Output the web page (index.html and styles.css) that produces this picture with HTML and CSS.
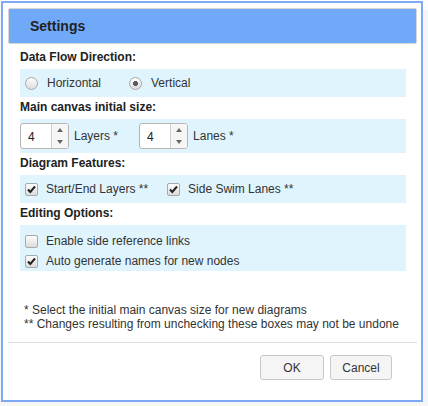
FILE: index.html
```html
<!DOCTYPE html>
<html>
<head>
<meta charset="utf-8">
<link rel="stylesheet" href="styles.css">
</head>
<body>
<div class="dialog">
  <div class="titlebar">Settings</div>
  <div class="content">
    <div class="section-label">Data Flow Direction:</div>
    <div class="row">
      <label class="opt radio-opt"><input type="radio" name="dir" class="radio"><span>Horizontal</span></label>
      <label class="opt radio-opt"><input type="radio" name="dir" class="radio" checked><span>Vertical</span></label>
    </div>
    <div class="section-label">Main canvas initial size:</div>
    <div class="row row-spin">
      <div class="spin-group">
        <div class="spinner"><span class="spin-val">4</span><span class="spin-btns"><span class="up"></span><span class="down"></span></span></div>
        <span class="spin-label">Layers *</span>
      </div>
      <div class="spin-group">
        <div class="spinner"><span class="spin-val">4</span><span class="spin-btns"><span class="up"></span><span class="down"></span></span></div>
        <span class="spin-label">Lanes *</span>
      </div>
    </div>
    <div class="section-label">Diagram Features:</div>
    <div class="row">
      <label class="opt cb-opt"><input type="checkbox" class="check" checked><span>Start/End Layers **</span></label>
      <label class="opt cb-opt"><input type="checkbox" class="check" checked><span>Side Swim Lanes **</span></label>
    </div>
    <div class="section-label">Editing Options:</div>
    <div class="row row-stack">
      <label class="opt cb-opt"><input type="checkbox" class="check"><span>Enable side reference links</span></label>
      <label class="opt cb-opt"><input type="checkbox" class="check" checked><span>Auto generate names for new nodes</span></label>
    </div>
    <div class="notes">
      <div>* Select the initial main canvas size for new diagrams</div>
      <div>** Changes resulting from unchecking these boxes may not be undone</div>
    </div>
  </div>
  <div class="buttonpane">
    <button class="btn btn-ok">OK</button>
    <button class="btn btn-cancel">Cancel</button>
  </div>
</div>
</body>
</html>
```
FILE: styles.css
```css
* { box-sizing: border-box; }
html, body { margin: 0; padding: 0; }
body {
  width: 428px;
  height: 406px;
  overflow: hidden;
  font-family: "Liberation Sans", Arial, sans-serif;
  font-size: 12px;
  color: #333;
  background: linear-gradient(#fff 0 10px, #f6f6f6 10px);
  padding: 1px 0 0 1px;
}
.dialog {
  width: 422px;
  height: 401px;
  border: 2px solid #7ea9f4;
  background: #fff;
  display: flex;
  flex-direction: column;
}
.titlebar {
  margin: 5px 4px 0 5px;
  height: 36px;
  background: #70a9f8;
  border: 1px solid #d6d6d6;
  border-radius: 2px;
  padding-left: 21px;
  display: flex;
  align-items: center;
  font-weight: bold;
  font-size: 14px;
  color: #222;
}
.content {
  padding: 3px 15px 0 17px;
  flex: 1;
}
.section-label {
  font-weight: bold;
  font-size: 12px;
  color: #222;
  line-height: 16px;
  padding: 2px 0 4px 0;
}
.row {
  background: #e0f4fd;
  display: flex;
  align-items: center;
  height: 28px;
  padding-left: 5px;
}
.row-spin { height: 34px; padding-left: 0; }
.row-stack {
  height: auto;
  flex-direction: column;
  align-items: flex-start;
  padding: 6px 0 0 5px;
}
.row-stack .opt { height: 20px; }
.opt {
  display: flex;
  align-items: center;
  gap: 8px;
  font-size: 12px;
  color: #333;
}
.radio-opt { margin-right: 28px; }
.radio-opt .radio { margin-right: 1px; }
.cb-opt { margin-right: 19px; }
.radio, .check {
  -webkit-appearance: none;
  appearance: none;
  margin: 0;
  width: 13px;
  height: 13px;
  border: 1px solid #a9a9a9;
  background: linear-gradient(#fdfdfd, #dcdcdc);
}
.radio { border-radius: 50%; }
.radio:checked {
  background: radial-gradient(circle, #5a5a5a 0 2.2px, transparent 2.8px), linear-gradient(#fdfdfd, #dcdcdc);
}
.check { border-radius: 2px; }
.check:checked {
  background: url("data:image/svg+xml,%3Csvg xmlns='http://www.w3.org/2000/svg' width='11' height='11' viewBox='0 0 11 11'%3E%3Cpath d='M2 5.5 L4.3 8 L9 2.5' fill='none' stroke='%23222' stroke-width='2'/%3E%3C/svg%3E") center/11px 11px no-repeat, linear-gradient(#fdfdfd, #dcdcdc);
}
.spin-group {
  display: flex;
  align-items: center;
  gap: 5px;
  margin-right: 21px;
}
.spinner {
  display: flex;
  width: 49px;
  height: 26px;
  border: 1px solid #b5b5b5;
  border-radius: 3px;
  background: #fff;
  overflow: hidden;
}
.spin-val {
  flex: 1;
  padding-left: 7px;
  line-height: 26px;
  font-size: 12px;
  color: #222;
}
.spin-btns {
  width: 17px;
  border-left: 1px solid #cfcfcf;
  display: flex;
  flex-direction: column;
  background: #f6f6f6;
}
.spin-btns .up, .spin-btns .down {
  flex: 1;
  display: flex;
  align-items: center;
  justify-content: center;
}
.spin-btns .up::after {
  content: "";
  border-left: 3.5px solid transparent;
  border-right: 3.5px solid transparent;
  border-bottom: 4px solid #666;
}
.spin-btns .down::after {
  content: "";
  border-left: 3.5px solid transparent;
  border-right: 3.5px solid transparent;
  border-top: 4px solid #666;
}
.spin-label { color: #333; font-size: 12px; }
.notes {
  margin-top: 32px;
  padding-left: 4px;
  font-size: 12px;
  line-height: 14px;
  color: #333;
}
.buttonpane {
  margin: 0 4px 0 5px;
  border-top: 1px solid #dcdcdc;
  height: 58px;
  display: flex;
  justify-content: flex-end;
  align-items: flex-start;
  padding: 12px 25px 0 0;
  gap: 6px;
}
.btn {
  font-family: "Liberation Sans", Arial, sans-serif;
  font-size: 12px;
  color: #333;
  background: #f5f5f5;
  border: 1px solid #c8c8c8;
  border-radius: 3px;
  height: 25px;
  padding: 0;
}
.btn-ok { width: 64px; }
.btn-cancel { width: 62px; }
```
